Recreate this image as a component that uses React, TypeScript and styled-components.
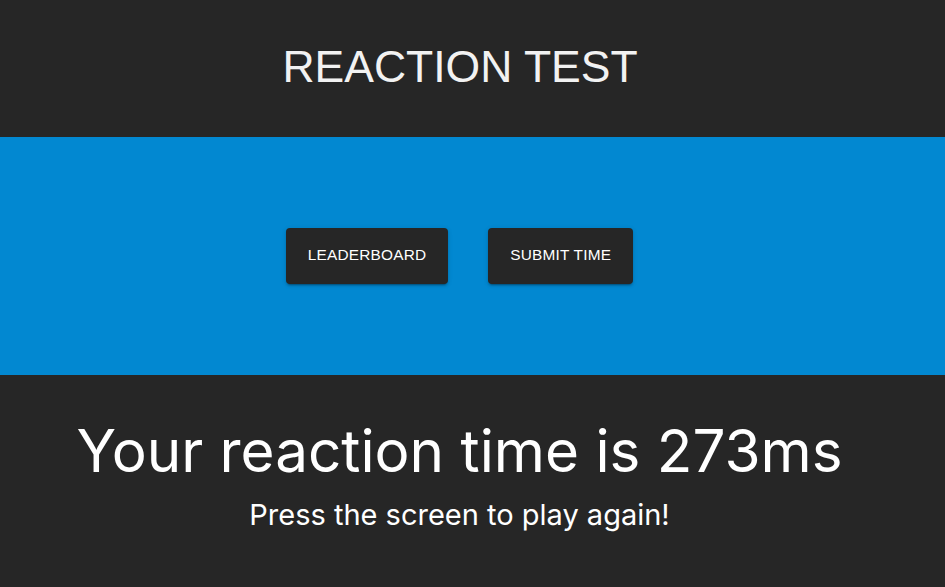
import React from 'react';
import styled, { createGlobalStyle } from 'styled-components';

const GlobalStyle = createGlobalStyle`
  html, body {
    margin: 0;
    padding: 0;
    background-color: #262626;
  }
`;

const App: React.FC = () => {
  return (
    <>
      <GlobalStyle />
      <Page>
        <Header>
          <Title>REACTION TEST</Title>
        </Header>
        <Band>
          <ButtonRow>
            <ActionButton>LEADERBOARD</ActionButton>
            <ActionButton>SUBMIT TIME</ActionButton>
          </ButtonRow>
        </Band>
        <Result>
          <ResultTime>Your reaction time is 273ms</ResultTime>
          <PlayAgain>Press the screen to play again!</PlayAgain>
        </Result>
      </Page>
    </>
  );
};

const Page = styled.div`
  min-height: 587px;
  background-color: #262626;
  color: #f5f5f5;
  font-family: 'Liberation Sans', Arial, sans-serif;
`;

const Header = styled.header`
  height: 137px;
  display: flex;
  align-items: center;
  justify-content: center;
  padding-right: 25px;
`;

const Title = styled.h1`
  margin: 0 0 4px;
  font-size: 44.5px;
  font-weight: 400;
  color: #f2f2f2;
`;

const Band = styled.section`
  height: 238px;
  background-color: #0288d1;
  display: flex;
  align-items: center;
  justify-content: center;
  padding-right: 26px;
`;

const ButtonRow = styled.div`
  display: flex;
  gap: 40px;
`;

const ActionButton = styled.button`
  height: 56px;
  padding: 0 22px 2px;
  border: none;
  border-radius: 4px;
  background-color: #262626;
  color: #ffffff;
  font-family: 'Liberation Sans', Arial, sans-serif;
  font-size: 15.4px;
  letter-spacing: 0.2px;
  box-shadow: 0 3px 1px -2px rgba(0,0,0,0.2), 0 2px 2px 0 rgba(0,0,0,0.14), 0 1px 5px 0 rgba(0,0,0,0.12);
  cursor: pointer;
`;

const Result = styled.section`
  display: flex;
  flex-direction: column;
  align-items: center;
  padding: 36px 26px 0 0;
  font-family: Inter, 'Liberation Sans', sans-serif;
`;

const ResultTime = styled.div`
  font-size: 58.4px;
  line-height: 80px;
  color: #ffffff;
`;

const PlayAgain = styled.div`
  margin-top: 4px;
  font-size: 29px;
  line-height: 40px;
  color: #ffffff;
`;

export default App;
